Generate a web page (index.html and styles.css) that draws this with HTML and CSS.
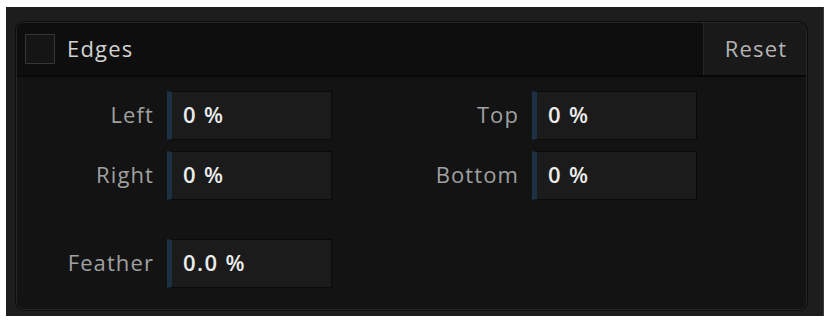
FILE: index.html
```html
<!DOCTYPE html>
<html lang="en">
<head>
    <meta charset="UTF-8">
    <meta name="viewport" content="width=device-width, initial-scale=1.0">
    <title>Edges</title>
    <link rel="stylesheet" href="styles.css">
</head>
<body>

<div class="frame">
    <div class="panel">
        <div class="header">
            <label class="toggle">
                <span class="checkbox"></span>
                <span class="title">Edges</span>
            </label>
            <button class="reset">Reset</button>
        </div>

        <div class="fields">
            <span class="label">Left</span>
            <div class="field"><span>0 %</span></div>
            <span class="label">Top</span>
            <div class="field"><span>0 %</span></div>

            <span class="label">Right</span>
            <div class="field"><span>0 %</span></div>
            <span class="label">Bottom</span>
            <div class="field"><span>0 %</span></div>

            <span class="label feather">Feather</span>
            <div class="field feather"><span>0.0 %</span></div>
        </div>
    </div>
</div>

</body>
</html>
```

FILE: styles.css
```css
body {
    margin: 0;
    background-color: #fff;
    font-family: 'Open Sans', sans-serif;
}
.frame {
    width: 818px;
    height: 309px;
    margin: 7px 0 0 6px;
    padding: 15px 16px 8px 10px;
    box-sizing: border-box;
    background-color: #1d1d1d;
    border-right: 1px solid #3a3a3a;
}
.panel {
    height: 100%;
    background-color: #131313;
    border: 1px solid #262626;
    border-radius: 8px;
    overflow: hidden;
    box-shadow: 0 0 0 1px #0c0c0c;
}
.header {
    display: flex;
    justify-content: space-between;
    height: 52px;
    background-color: #0e0e0e;
    border-bottom: 2px solid #080808;
}
.toggle {
    display: flex;
    align-items: center;
    padding-left: 8px;
}
.checkbox {
    width: 28px;
    height: 28px;
    border: 1px solid #363636;
    background-color: #151515;
    margin-right: 12px;
}
.title {
    font-size: 22px;
    font-weight: 500;
    letter-spacing: 1.2px;
    color: #d2d2d2;
    padding-bottom: 3px;
}
.reset {
    width: 103px;
    background-color: #191919;
    border: none;
    border-left: 1px solid #262626;
    color: #b4b4b4;
    font-family: 'Open Sans', sans-serif;
    font-size: 22px;
    font-weight: 500;
    letter-spacing: 1.2px;
    padding: 0 0 3px 2px;
}
.fields {
    display: grid;
    grid-template-columns: 150px 165px 200px 165px;
    grid-auto-rows: 49px;
    row-gap: 11px;
    padding-top: 14px;
}
.label {
    display: flex;
    align-items: center;
    justify-content: flex-end;
    padding: 0 13px 3px 0;
    font-size: 22px;
    font-weight: 500;
    letter-spacing: 1.1px;
    color: #a0a0a0;
}
.field {
    display: flex;
    align-items: center;
    background-color: #1b1b1b;
    border: 1px solid #0a0a0a;
    border-left: 5px solid #1c3144;
    padding: 0 0 3px 11px;
    font-size: 22px;
    font-weight: 600;
    letter-spacing: 1.4px;
    color: #ececec;
}
.feather {
    margin-top: 28px;
    margin-bottom: -28px;
}
```
